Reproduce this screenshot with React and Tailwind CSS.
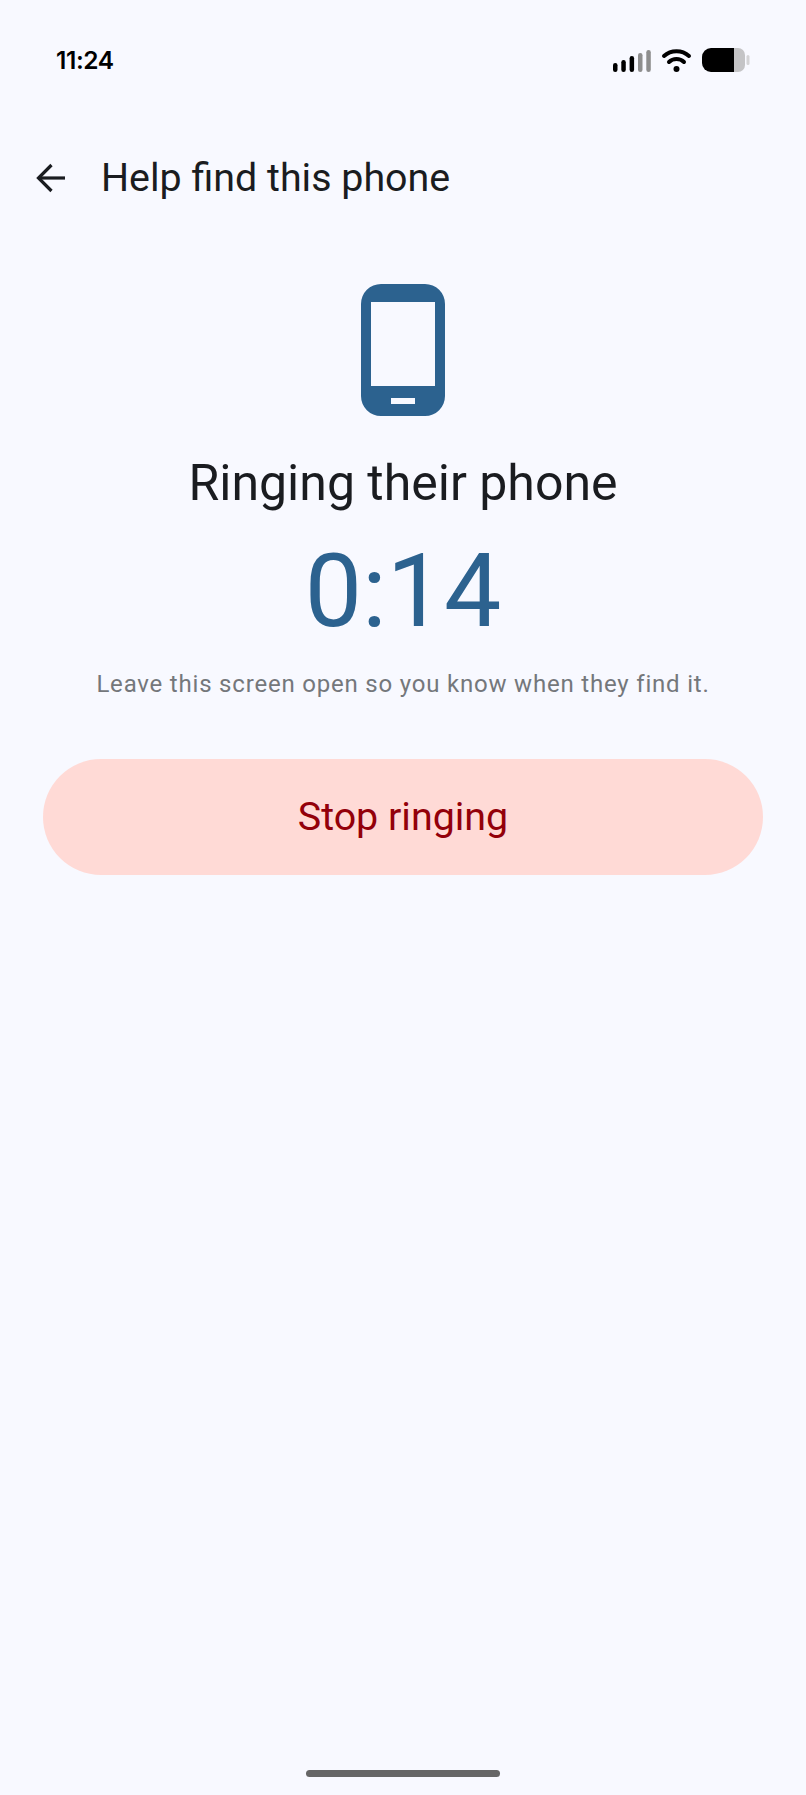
import React from "react";

const StatusBar = () => (
  <div className="flex items-center justify-between h-[60px] mt-[30px] pl-[56px] pr-[56px]">
    <span className="mt-[1px] text-[24.5px] font-semibold text-black font-['Inter',sans-serif] tracking-[-0.4px]">11:24</span>
    <svg width="137" height="24" viewBox="0 0 137 24">
      <rect x="0" y="15" width="4.5" height="9" rx="2.2" fill="#000" />
      <rect x="8.3" y="12" width="4.5" height="12" rx="2.2" fill="#000" />
      <rect x="16.6" y="8" width="4.5" height="16" rx="2.2" fill="#000" />
      <rect x="25" y="5" width="4.5" height="19" rx="2.2" fill="#8e8e8e" />
      <rect x="33.3" y="2" width="4.5" height="22" rx="2.2" fill="#8e8e8e" />
      <path d="M51 8 C58 1.5 69 1.5 76 8" fill="none" stroke="#000" strokeWidth="4" strokeLinecap="round" />
      <path d="M56 14 C60 10 67 10 71 14" fill="none" stroke="#000" strokeWidth="4" strokeLinecap="round" />
      <circle cx="63.5" cy="21" r="3" fill="#000" />
      <path d="M98 0 H121 V24 H98 A9 9 0 0 1 89 15 V9 A9 9 0 0 1 98 0 Z" fill="#000" />
      <path d="M121 0 H125 A7 7 0 0 1 132 7 V17 A7 7 0 0 1 125 24 H121 Z" fill="#c4c4c6" />
      <rect x="133.5" y="7" width="3" height="10" rx="1.5" fill="#d4d4d6" />
    </svg>
  </div>
);

export default function App() {
  return (
    <div className="relative w-[806px] h-[1795px] overflow-hidden bg-[#f8f9ff] font-['Roboto',sans-serif]">
      <StatusBar />

      <div className="flex items-center h-[64px] mt-[56px] pl-[36px]">
        <svg width="30" height="30" viewBox="0 0 30 30" fill="none" stroke="#1a1c20" strokeWidth="3.2">
          <path d="M29 15 H3" />
          <path d="M15.5 2 L2.5 15 L15.5 28" />
        </svg>
        <h1 className="ml-[35px] text-[39.4px] text-[#1a1c20] font-normal">Help find this phone</h1>
      </div>

      <div className="flex flex-col items-center mt-[74px]">
        <svg width="84" height="132" viewBox="0 0 84 132">
          <path
            fillRule="evenodd"
            fill="#2c628f"
            d="M20 0 H64 A20 20 0 0 1 84 20 V112 A20 20 0 0 1 64 132 H20 A20 20 0 0 1 0 112 V20 A20 20 0 0 1 20 0 Z M10 18 V102 H74 V18 Z M30 114 V120 H54 V114 Z"
          />
        </svg>
        <h2 className="mt-[37px] text-[50px] leading-[60px] text-[#1a1c20] font-normal">Ringing their phone</h2>
        <div className="mt-[22px] text-[102px] leading-[112px] text-[#2c628f]">0:14</div>
        <p className="mt-[21px] text-[24px] leading-[32px] tracking-[0.8px] text-[#74777b]">
          Leave this screen open so you know when they find it.
        </p>
        <button className="mt-[59px] w-[720px] h-[116px] rounded-full bg-[#ffdad6] text-[39.4px] text-[#93000a]">
          Stop ringing
        </button>
      </div>

      <div className="absolute left-[306px] bottom-[18px] w-[194px] h-[7px] rounded-full bg-[#666666]" />
    </div>
  );
}
